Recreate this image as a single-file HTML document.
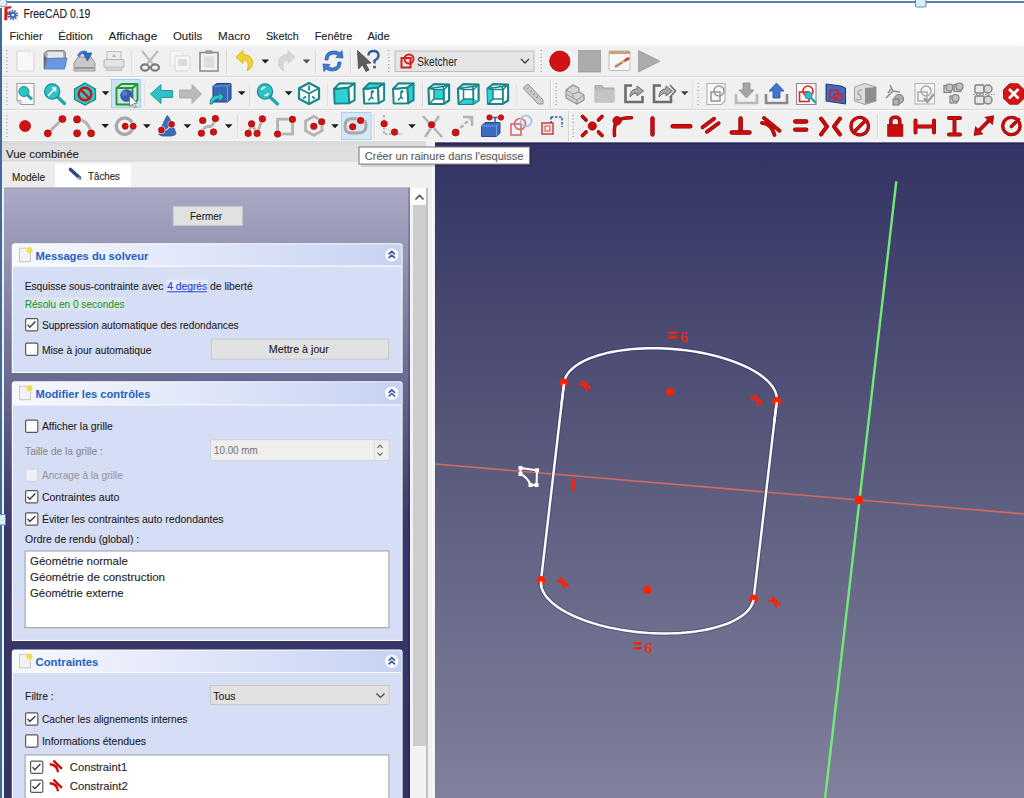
<!DOCTYPE html>
<html><head><meta charset="utf-8"><style>
html,body{margin:0;padding:0;background:#fff;overflow:hidden}
svg{display:block}
text{font-family:"Liberation Sans", sans-serif}
</style></head><body>
<svg width="1024" height="798" viewBox="0 0 1024 798">
<defs>
<linearGradient id="g3d" x1="0" y1="0" x2="0" y2="1">
 <stop offset="0" stop-color="#333365"/>
 <stop offset="0.4" stop-color="#535378"/>
 <stop offset="1" stop-color="#81819d"/>
</linearGradient>
<linearGradient id="gpanel" gradientUnits="userSpaceOnUse" x1="0" y1="188" x2="0" y2="798">
 <stop offset="0" stop-color="#aaaac5"/>
 <stop offset="0.56" stop-color="#37376a"/>
 <stop offset="1" stop-color="#333366"/>
</linearGradient>
<linearGradient id="ghdr" x1="0" y1="0" x2="1" y2="0">
 <stop offset="0" stop-color="#f8f9fe"/>
 <stop offset="1" stop-color="#c6d2f2"/>
</linearGradient>
<linearGradient id="gtop" x1="0" y1="0" x2="0" y2="1">
 <stop offset="0" stop-color="#ffffff"/>
 <stop offset="1" stop-color="#f0f0f0"/>
</linearGradient>
</defs><rect x="0" y="0" width="1024" height="798" fill="#ffffff" /><rect x="0" y="44" width="1024" height="4" fill="url(#gtop)" /><rect x="0" y="48" width="1024" height="94" fill="#f0f0f0" /><rect x="0" y="76" width="1024" height="1" fill="#d6d6d6" /><rect x="0" y="77" width="1024" height="1" fill="#fafafa" /><rect x="0" y="109" width="1024" height="1" fill="#d6d6d6" /><rect x="0" y="110" width="1024" height="1" fill="#fafafa" /><rect x="0" y="140" width="1024" height="1" fill="#f6f6f6" /><rect x="0" y="1" width="1024" height="2" fill="#5a7fab" /><rect x="0" y="8" width="2" height="790" fill="#3f6a9a" /><text x="23.4" y="18.2" font-size="12.5" fill="#1b1b2a" font-weight="normal" text-anchor="start" textLength="67.0" lengthAdjust="spacingAndGlyphs" stroke="#1b1b2a" stroke-width="0.12" >FreeCAD 0.19</text><path d="M4.5 7.5 Q6 6 11.5 6.2 L11 8.6 L7.6 8.8 L7.5 12.2 L10.5 12.2 L10.2 14.5 L7.5 14.5 L7.3 20.2 L4.2 20.2 Z" fill="#dc1c1c"/><circle cx="12.8" cy="15" r="4.2" fill="none" stroke="#3a68b0" stroke-width="2.2" stroke-dasharray="1.5 1.1"/><circle cx="12.8" cy="15" r="3.2" fill="#3a68b0"/><circle cx="12.8" cy="15" r="1.2" fill="#ffffff"/><circle cx="3" cy="3" r="4" fill="#e6eef8" stroke="#7a98bd" stroke-width="1"/><rect x="915.5" y="-1.5" width="10.5" height="8.5" rx="1.5" fill="#d4eefa" stroke="#6a8ab8" stroke-width="1.1"/><text x="9.4" y="39.5" font-size="11.7" fill="#1e1e1e" font-weight="normal" text-anchor="start" textLength="33.2" lengthAdjust="spacingAndGlyphs" stroke="#1e1e1e" stroke-width="0.12" >Fichier</text><text x="58.2" y="39.5" font-size="11.7" fill="#1e1e1e" font-weight="normal" text-anchor="start" textLength="34.6" lengthAdjust="spacingAndGlyphs" stroke="#1e1e1e" stroke-width="0.12" >Édition</text><text x="108.4" y="39.5" font-size="11.7" fill="#1e1e1e" font-weight="normal" text-anchor="start" textLength="48.8" lengthAdjust="spacingAndGlyphs" stroke="#1e1e1e" stroke-width="0.12" >Affichage</text><text x="172.9" y="39.5" font-size="11.7" fill="#1e1e1e" font-weight="normal" text-anchor="start" textLength="29.3" lengthAdjust="spacingAndGlyphs" stroke="#1e1e1e" stroke-width="0.12" >Outils</text><text x="218.1" y="39.5" font-size="11.7" fill="#1e1e1e" font-weight="normal" text-anchor="start" textLength="32.1" lengthAdjust="spacingAndGlyphs" stroke="#1e1e1e" stroke-width="0.12" >Macro</text><text x="265.9" y="39.5" font-size="11.7" fill="#1e1e1e" font-weight="normal" text-anchor="start" textLength="32.8" lengthAdjust="spacingAndGlyphs" stroke="#1e1e1e" stroke-width="0.12" >Sketch</text><text x="314.7" y="39.5" font-size="11.7" fill="#1e1e1e" font-weight="normal" text-anchor="start" textLength="37.5" lengthAdjust="spacingAndGlyphs" stroke="#1e1e1e" stroke-width="0.12" >Fenêtre</text><text x="367.4" y="39.5" font-size="11.7" fill="#1e1e1e" font-weight="normal" text-anchor="start" textLength="22.3" lengthAdjust="spacingAndGlyphs" stroke="#1e1e1e" stroke-width="0.12" >Aide</text><rect x="2" y="141" width="433" height="657" fill="#f0f0f0" /><rect x="2" y="141" width="433" height="4" fill="#dadada" /><rect x="2" y="145" width="433" height="16" fill="#dfdfdf" /><rect x="2" y="160.5" width="433" height="1" fill="#d2d2d2" /><text x="6.0" y="158.2" font-size="11.7" fill="#1e1e1e" font-weight="normal" text-anchor="start" textLength="73.0" lengthAdjust="spacingAndGlyphs" stroke="#1e1e1e" stroke-width="0.12" >Vue combinée</text><rect x="3" y="164" width="52" height="23" fill="#ececec" /><rect x="55" y="164" width="76" height="23" fill="#ffffff" /><text x="12.0" y="181.0" font-size="11.5" fill="#1e1e1e" font-weight="normal" text-anchor="start" textLength="33.0" lengthAdjust="spacingAndGlyphs" stroke="#1e1e1e" stroke-width="0.12" >Modèle</text><text x="88.0" y="179.5" font-size="11.5" fill="#1e1e1e" font-weight="normal" text-anchor="start" textLength="32.0" lengthAdjust="spacingAndGlyphs" stroke="#1e1e1e" stroke-width="0.12" >Tâches</text><g transform="translate(69,168)"><path d="M1.5 1.5 L10.5 9.8" stroke="#2a4a8a" stroke-width="3.6" stroke-linecap="round"/><path d="M9.5 8.2 L13.6 12.6 L8.3 11 Z" fill="#a8a8b0"/></g><rect x="4" y="188" width="406" height="610" fill="url(#gpanel)" /><rect x="4" y="187.5" width="406" height="1" fill="#9494ae" /><rect x="408.3" y="188" width="2" height="610" fill="#101040" opacity="0.25"/><rect x="410" y="188" width="16" height="610" fill="#f2f2f2" /><rect x="410" y="188" width="16" height="17" fill="#fbfbfb" /><rect x="413" y="205" width="13" height="541" fill="#cdcdcd" /><path d="M415.5 199.5 L419.5 195.5 L423.5 199.5" fill="none" stroke="#505050" stroke-width="1.6"/><rect x="426" y="141" width="9" height="657" fill="#f0f0f0" /><rect x="426" y="188" width="2" height="610" fill="#c2c2c2" /><rect x="432" y="141" width="1.5" height="657" fill="#fafafa" /><rect x="173.2" y="206.4" width="69.3" height="19.1" fill="#e1e1e1" stroke="#c8c8c8" stroke-width="0.8"/><text x="190.0" y="220.4" font-size="11.7" fill="#1e1e1e" font-weight="normal" text-anchor="start" textLength="32.2" lengthAdjust="spacingAndGlyphs" stroke="#1e1e1e" stroke-width="0.12" >Fermer</text><path d="M11.8 373 L11.8 246.2 Q11.8 243.2 14.8 243.2 L399.6 243.2 Q402.6 243.2 402.6 246.2 L402.6 373 Z" fill="#ffffff"/><path d="M12.8 265.6 L12.8 246.7 Q12.8 244.2 15.3 244.2 L399.1 244.2 Q401.6 244.2 401.6 246.7 L401.6 265.6 Z" fill="url(#ghdr)"/><rect x="12.8" y="266.6" width="388.8" height="105.39999999999998" fill="#d6def6" /><rect x="19.5" y="248.2" width="11" height="13.5" fill="#f2f2f2" stroke="#c9c9c9" stroke-width="1"/><circle cx="29.5" cy="250.2" r="3" fill="#f0e040"/><text x="35.5" y="259.6" font-size="11.7" fill="#2160c8" font-weight="bold" text-anchor="start" textLength="112.8" lengthAdjust="spacingAndGlyphs" >Messages du solveur</text><circle cx="391.8" cy="254.9" r="7" fill="#ffffff" stroke="#c8d0e8" stroke-width="0.8"/><path d="M388.6 254.4 L391.8 251.4 L395 254.4 M388.6 258.1 L391.8 255.1 L395 258.1" fill="none" stroke="#2a56a8" stroke-width="1.6"/><text x="24.7" y="290.3" font-size="11.7" fill="#1e1e1e" font-weight="normal" text-anchor="start" textLength="138.6" lengthAdjust="spacingAndGlyphs" stroke="#1e1e1e" stroke-width="0.12" >Esquisse sous-contrainte avec</text><rect x="166.5" y="279.5" width="41.5" height="14" fill="#e4eaf8" /><text x="167.2" y="290.3" font-size="11.7" fill="#1a3ee0" font-weight="normal" text-anchor="start" textLength="40.0" lengthAdjust="spacingAndGlyphs" stroke="#1a3ee0" stroke-width="0.12" >4 degrés</text><rect x="167" y="291.3" width="40" height="1" fill="#1a3ee0"/><text x="210.0" y="290.3" font-size="11.7" fill="#1e1e1e" font-weight="normal" text-anchor="start" textLength="42.7" lengthAdjust="spacingAndGlyphs" stroke="#1e1e1e" stroke-width="0.12" >de liberté</text><rect x="24" y="297.5" width="101.5" height="13" fill="#dfe5ef" /><text x="24.7" y="308.3" font-size="11.7" fill="#1e9a30" font-weight="normal" text-anchor="start" textLength="99.9" lengthAdjust="spacingAndGlyphs" stroke="#1e9a30" stroke-width="0.12" >Résolu en 0 secondes</text><rect x="25.6" y="318.6" width="12.2" height="12.2" rx="1.2" fill="#ffffff" stroke="#5a5a5a" stroke-width="1.2"/><path d="M27.6 324.6 L29.8 327.2 L35.4 321.6" fill="none" stroke="#3a3a3a" stroke-width="1.4"/><text x="41.9" y="329.1" font-size="11.7" fill="#1e1e1e" font-weight="normal" text-anchor="start" textLength="196.8" lengthAdjust="spacingAndGlyphs" stroke="#1e1e1e" stroke-width="0.12" >Suppression automatique des redondances</text><rect x="25.6" y="343.1" width="12.2" height="12.2" rx="1.2" fill="#ffffff" stroke="#5a5a5a" stroke-width="1.2"/><text x="41.9" y="354.0" font-size="11.7" fill="#1e1e1e" font-weight="normal" text-anchor="start" textLength="109.6" lengthAdjust="spacingAndGlyphs" stroke="#1e1e1e" stroke-width="0.12" >Mise à jour automatique</text><rect x="211.2" y="339.1" width="177.5" height="20" fill="#e1e1e1" stroke="#c4c4c4" stroke-width="0.8"/><text x="268.8" y="353.3" font-size="11.7" fill="#1e1e1e" font-weight="normal" text-anchor="start" textLength="60.1" lengthAdjust="spacingAndGlyphs" stroke="#1e1e1e" stroke-width="0.12" >Mettre à jour</text><path d="M11.8 640.9 L11.8 384.2 Q11.8 381.2 14.8 381.2 L399.6 381.2 Q402.6 381.2 402.6 384.2 L402.6 640.9 Z" fill="#ffffff"/><path d="M12.8 404.4 L12.8 384.7 Q12.8 382.2 15.3 382.2 L399.1 382.2 Q401.6 382.2 401.6 384.7 L401.6 404.4 Z" fill="url(#ghdr)"/><rect x="12.8" y="405.4" width="388.8" height="234.5" fill="#d6def6" /><rect x="19.5" y="386.2" width="11" height="13.5" fill="#f2f2f2" stroke="#c9c9c9" stroke-width="1"/><circle cx="29.5" cy="388.2" r="3" fill="#f0e040"/><text x="35.5" y="398.4" font-size="11.7" fill="#2160c8" font-weight="bold" text-anchor="start" textLength="114.9" lengthAdjust="spacingAndGlyphs" >Modifier les contrôles</text><circle cx="391.8" cy="393.29999999999995" r="7" fill="#ffffff" stroke="#c8d0e8" stroke-width="0.8"/><path d="M388.6 392.79999999999995 L391.8 389.79999999999995 L395 392.79999999999995 M388.6 396.49999999999994 L391.8 393.49999999999994 L395 396.49999999999994" fill="none" stroke="#2a56a8" stroke-width="1.6"/><rect x="25.6" y="420.1" width="12.2" height="12.2" rx="1.2" fill="#ffffff" stroke="#5a5a5a" stroke-width="1.2"/><text x="41.9" y="430.1" font-size="11.7" fill="#1e1e1e" font-weight="normal" text-anchor="start" textLength="70.9" lengthAdjust="spacingAndGlyphs" stroke="#1e1e1e" stroke-width="0.12" >Afficher la grille</text><text x="25.1" y="454.8" font-size="11.7" fill="#8a8a8a" font-weight="normal" text-anchor="start" textLength="77.6" lengthAdjust="spacingAndGlyphs" stroke="#8a8a8a" stroke-width="0.12" >Taille de la grille :</text><rect x="210.7" y="439.8" width="178.4" height="20.6" fill="#efefef" stroke="#d0d0d0" stroke-width="0.8"/><text x="214.0" y="454.4" font-size="11.7" fill="#7a7a7a" font-weight="normal" text-anchor="start" textLength="43.6" lengthAdjust="spacingAndGlyphs" stroke="#7a7a7a" stroke-width="0.12" >10.00 mm</text><path d="M377.5 448 L380 445 L382.5 448 M377.5 452.5 L380 455.5 L382.5 452.5" fill="none" stroke="#555" stroke-width="1.1"/><rect x="374" y="440.5" width="0.8" height="19" fill="#d8d8d8" /><rect x="25.6" y="469.1" width="12.2" height="12.2" rx="1.2" fill="#eef0f8" stroke="#d4d4dc" stroke-width="1.2"/><text x="41.9" y="479.0" font-size="11.7" fill="#9a9a9a" font-weight="normal" text-anchor="start" textLength="81.0" lengthAdjust="spacingAndGlyphs" stroke="#9a9a9a" stroke-width="0.12" >Ancrage à la grille</text><rect x="25.6" y="490.6" width="12.2" height="12.2" rx="1.2" fill="#ffffff" stroke="#5a5a5a" stroke-width="1.2"/><path d="M27.6 496.6 L29.8 499.2 L35.4 493.6" fill="none" stroke="#3a3a3a" stroke-width="1.4"/><text x="41.9" y="500.6" font-size="11.7" fill="#1e1e1e" font-weight="normal" text-anchor="start" textLength="77.4" lengthAdjust="spacingAndGlyphs" stroke="#1e1e1e" stroke-width="0.12" >Contraintes auto</text><rect x="25.6" y="512.9" width="12.2" height="12.2" rx="1.2" fill="#ffffff" stroke="#5a5a5a" stroke-width="1.2"/><path d="M27.6 518.9 L29.8 521.5 L35.4 515.9" fill="none" stroke="#3a3a3a" stroke-width="1.4"/><text x="41.9" y="523.2" font-size="11.7" fill="#1e1e1e" font-weight="normal" text-anchor="start" textLength="181.7" lengthAdjust="spacingAndGlyphs" stroke="#1e1e1e" stroke-width="0.12" >Éviter les contraintes auto redondantes</text><text x="25.1" y="542.5" font-size="11.7" fill="#1e1e1e" font-weight="normal" text-anchor="start" textLength="114.1" lengthAdjust="spacingAndGlyphs" stroke="#1e1e1e" stroke-width="0.12" >Ordre de rendu (global) :</text><rect x="25.1" y="551" width="363.8" height="76.7" fill="#ffffff" stroke="#9a9aa6" stroke-width="1"/><text x="30.1" y="564.9" font-size="11.7" fill="#1e1e1e" font-weight="normal" text-anchor="start" textLength="97.7" lengthAdjust="spacingAndGlyphs" stroke="#1e1e1e" stroke-width="0.12" >Géométrie normale</text><text x="30.1" y="581.2" font-size="11.7" fill="#1e1e1e" font-weight="normal" text-anchor="start" textLength="134.9" lengthAdjust="spacingAndGlyphs" stroke="#1e1e1e" stroke-width="0.12" >Géométrie de construction</text><text x="30.1" y="597.1" font-size="11.7" fill="#1e1e1e" font-weight="normal" text-anchor="start" textLength="93.4" lengthAdjust="spacingAndGlyphs" stroke="#1e1e1e" stroke-width="0.12" >Géométrie externe</text><path d="M11.8 810 L11.8 652.4 Q11.8 649.4 14.8 649.4 L399.6 649.4 Q402.6 649.4 402.6 652.4 L402.6 810 Z" fill="#ffffff"/><path d="M12.8 671.9 L12.8 652.9 Q12.8 650.4 15.3 650.4 L399.1 650.4 Q401.6 650.4 401.6 652.9 L401.6 671.9 Z" fill="url(#ghdr)"/><rect x="12.8" y="672.9" width="388.8" height="136.10000000000002" fill="#d6def6" /><rect x="19.5" y="654.4" width="11" height="13.5" fill="#f2f2f2" stroke="#c9c9c9" stroke-width="1"/><circle cx="29.5" cy="656.4" r="3" fill="#f0e040"/><text x="35.5" y="665.9" font-size="11.7" fill="#2160c8" font-weight="bold" text-anchor="start" textLength="62.9" lengthAdjust="spacingAndGlyphs" >Contraintes</text><circle cx="391.8" cy="661.15" r="7" fill="#ffffff" stroke="#c8d0e8" stroke-width="0.8"/><path d="M388.6 660.65 L391.8 657.65 L395 660.65 M388.6 664.35 L391.8 661.35 L395 664.35" fill="none" stroke="#2a56a8" stroke-width="1.6"/><text x="25.1" y="700.2" font-size="11.7" fill="#1e1e1e" font-weight="normal" text-anchor="start" textLength="28.6" lengthAdjust="spacingAndGlyphs" stroke="#1e1e1e" stroke-width="0.12" >Filtre :</text><rect x="210.3" y="685.5" width="178.8" height="18.9" fill="#e1e1e1" stroke="#c4c4c4" stroke-width="0.8"/><text x="213.3" y="700.1" font-size="11.7" fill="#1e1e1e" font-weight="normal" text-anchor="start" textLength="22.2" lengthAdjust="spacingAndGlyphs" stroke="#1e1e1e" stroke-width="0.12" >Tous</text><path d="M376.5 693.5 L380.5 697.5 L384.5 693.5" fill="none" stroke="#444" stroke-width="1.2"/><rect x="25.6" y="712.9" width="12.2" height="12.2" rx="1.2" fill="#ffffff" stroke="#5a5a5a" stroke-width="1.2"/><path d="M27.6 718.9 L29.8 721.5 L35.4 715.9" fill="none" stroke="#3a3a3a" stroke-width="1.4"/><text x="41.9" y="722.7" font-size="11.7" fill="#1e1e1e" font-weight="normal" text-anchor="start" textLength="145.5" lengthAdjust="spacingAndGlyphs" stroke="#1e1e1e" stroke-width="0.12" >Cacher les alignements internes</text><rect x="25.6" y="734.9" width="12.2" height="12.2" rx="1.2" fill="#ffffff" stroke="#5a5a5a" stroke-width="1.2"/><text x="41.9" y="744.9" font-size="11.7" fill="#1e1e1e" font-weight="normal" text-anchor="start" textLength="104.2" lengthAdjust="spacingAndGlyphs" stroke="#1e1e1e" stroke-width="0.12" >Informations étendues</text><rect x="25.1" y="755" width="363.8" height="60" fill="#ffffff" stroke="#9a9aa6" stroke-width="1"/><rect x="30.6" y="761.1" width="12.2" height="12.2" rx="1.2" fill="#ffffff" stroke="#5a5a5a" stroke-width="1.2"/><path d="M32.6 767.1 L34.8 769.7 L40.4 764.1" fill="none" stroke="#3a3a3a" stroke-width="1.4"/><g transform="translate(49,760.0)"><path d="M4.4 0.6 L12.9 8.9 M0.7 4.2 Q8.5 4.6 8.9 12.3" stroke="#cc0a0a" stroke-width="2.4" fill="none"/></g><text x="69.8" y="771.1" font-size="11.7" fill="#1e1e1e" font-weight="normal" text-anchor="start" textLength="57.4" lengthAdjust="spacingAndGlyphs" stroke="#1e1e1e" stroke-width="0.12" >Constraint1</text><rect x="30.6" y="780.1" width="12.2" height="12.2" rx="1.2" fill="#ffffff" stroke="#5a5a5a" stroke-width="1.2"/><path d="M32.6 786.1 L34.8 788.7 L40.4 783.1" fill="none" stroke="#3a3a3a" stroke-width="1.4"/><g transform="translate(49,779.0)"><path d="M4.4 0.6 L12.9 8.9 M0.7 4.2 Q8.5 4.6 8.9 12.3" stroke="#cc0a0a" stroke-width="2.4" fill="none"/></g><text x="69.8" y="790.0" font-size="11.7" fill="#1e1e1e" font-weight="normal" text-anchor="start" textLength="58.0" lengthAdjust="spacingAndGlyphs" stroke="#1e1e1e" stroke-width="0.12" >Constraint2</text><rect x="435" y="142.5" width="589" height="656" fill="url(#g3d)" /><rect x="435" y="142.5" width="589" height="2" fill="#20205a" opacity="0.7"/><line x1="435.0" y1="464.0" x2="1024.0" y2="513.9" stroke="#d46a5e" stroke-width="1.6"/><line x1="896.3" y1="181.3" x2="825.1" y2="798.0" stroke="#70ec74" stroke-width="2.4"/><path d="M564.05 382.80 L564.46 380.57 L565.16 378.38 L566.14 376.22 L567.41 374.10 L568.97 372.04 L570.80 370.02 L572.91 368.07 L575.28 366.19 L577.91 364.37 L580.80 362.63 L583.93 360.97 L587.30 359.40 L590.90 357.92 L594.71 356.52 L598.73 355.23 L602.95 354.04 L607.36 352.95 L611.93 351.97 L616.67 351.09 L621.56 350.33 L626.57 349.69 L631.71 349.16 L636.96 348.75 L642.29 348.45 L647.70 348.28 L653.18 348.22 L658.70 348.29 L664.26 348.47 L669.83 348.78 L675.40 349.20 L680.96 349.74 L686.49 350.40 L691.98 351.17 L697.40 352.05 L702.76 353.04 L708.02 354.14 L713.18 355.34 L718.22 356.64 L723.14 358.04 L727.91 359.53 L732.52 361.12 L736.96 362.78 L741.21 364.53 L745.28 366.35 L749.14 368.24 L752.78 370.20 L756.20 372.21 L759.38 374.29 L762.32 376.41 L765.00 378.57 L767.43 380.77 L769.59 383.00 L771.48 385.25 L773.09 387.52 L774.42 389.81 L775.47 392.10 L776.22 394.39 L776.69 396.68 L776.87 398.95 L776.75 401.20 L753.65 598.89 L753.25 601.12 L752.55 603.32 L751.56 605.48 L750.29 607.59 L748.74 609.66 L746.90 611.67 L744.80 613.62 L742.43 615.51 L739.79 617.32 L736.91 619.06 L733.77 620.72 L730.41 622.29 L726.81 623.78 L722.99 625.17 L718.97 626.46 L714.75 627.66 L710.35 628.74 L705.77 629.73 L701.03 630.60 L696.15 631.36 L691.13 632.00 L685.99 632.53 L680.75 632.95 L675.41 633.24 L670.00 633.42 L664.53 633.47 L659.00 633.41 L653.45 633.22 L647.88 632.92 L642.30 632.49 L636.75 631.95 L631.22 631.30 L625.73 630.53 L620.30 629.65 L614.95 628.65 L609.69 627.56 L604.52 626.35 L599.48 625.05 L594.57 623.65 L589.80 622.16 L585.19 620.58 L580.75 618.91 L576.49 617.17 L572.43 615.34 L568.57 613.45 L564.93 611.50 L561.51 609.48 L558.33 607.41 L555.39 605.29 L552.70 603.13 L550.28 600.93 L548.12 598.70 L546.23 596.44 L544.62 594.17 L543.28 591.88 L542.24 589.59 L541.48 587.30 L541.01 585.02 L540.84 582.75 L540.95 580.49 Z" fill="none" stroke="#1c1c50" stroke-width="4.4" stroke-linejoin="round" opacity="0.3"/><path d="M564.05 382.80 L564.46 380.57 L565.16 378.38 L566.14 376.22 L567.41 374.10 L568.97 372.04 L570.80 370.02 L572.91 368.07 L575.28 366.19 L577.91 364.37 L580.80 362.63 L583.93 360.97 L587.30 359.40 L590.90 357.92 L594.71 356.52 L598.73 355.23 L602.95 354.04 L607.36 352.95 L611.93 351.97 L616.67 351.09 L621.56 350.33 L626.57 349.69 L631.71 349.16 L636.96 348.75 L642.29 348.45 L647.70 348.28 L653.18 348.22 L658.70 348.29 L664.26 348.47 L669.83 348.78 L675.40 349.20 L680.96 349.74 L686.49 350.40 L691.98 351.17 L697.40 352.05 L702.76 353.04 L708.02 354.14 L713.18 355.34 L718.22 356.64 L723.14 358.04 L727.91 359.53 L732.52 361.12 L736.96 362.78 L741.21 364.53 L745.28 366.35 L749.14 368.24 L752.78 370.20 L756.20 372.21 L759.38 374.29 L762.32 376.41 L765.00 378.57 L767.43 380.77 L769.59 383.00 L771.48 385.25 L773.09 387.52 L774.42 389.81 L775.47 392.10 L776.22 394.39 L776.69 396.68 L776.87 398.95 L776.75 401.20 L753.65 598.89 L753.25 601.12 L752.55 603.32 L751.56 605.48 L750.29 607.59 L748.74 609.66 L746.90 611.67 L744.80 613.62 L742.43 615.51 L739.79 617.32 L736.91 619.06 L733.77 620.72 L730.41 622.29 L726.81 623.78 L722.99 625.17 L718.97 626.46 L714.75 627.66 L710.35 628.74 L705.77 629.73 L701.03 630.60 L696.15 631.36 L691.13 632.00 L685.99 632.53 L680.75 632.95 L675.41 633.24 L670.00 633.42 L664.53 633.47 L659.00 633.41 L653.45 633.22 L647.88 632.92 L642.30 632.49 L636.75 631.95 L631.22 631.30 L625.73 630.53 L620.30 629.65 L614.95 628.65 L609.69 627.56 L604.52 626.35 L599.48 625.05 L594.57 623.65 L589.80 622.16 L585.19 620.58 L580.75 618.91 L576.49 617.17 L572.43 615.34 L568.57 613.45 L564.93 611.50 L561.51 609.48 L558.33 607.41 L555.39 605.29 L552.70 603.13 L550.28 600.93 L548.12 598.70 L546.23 596.44 L544.62 594.17 L543.28 591.88 L542.24 589.59 L541.48 587.30 L541.01 585.02 L540.84 582.75 L540.95 580.49 Z" fill="none" stroke="#ffffff" stroke-width="2.4" stroke-linejoin="round"/><circle cx="564.0" cy="382.8" r="4.4" fill="#ff2000"/><circle cx="776.8" cy="401.2" r="4.4" fill="#ff2000"/><circle cx="753.7" cy="598.9" r="4.4" fill="#ff2000"/><circle cx="541.0" cy="580.5" r="4.4" fill="#ff2000"/><line x1="564.0" y1="383.8" x2="561.5" y2="404.2" stroke="#ffffff" stroke-width="2.4"/><line x1="776.8" y1="402.2" x2="774.2" y2="422.6" stroke="#ffffff" stroke-width="2.4"/><line x1="753.7" y1="599.9" x2="751.8" y2="605.2" stroke="#ffffff" stroke-width="2.4"/><line x1="541.0" y1="581.5" x2="541.3" y2="587.0" stroke="#ffffff" stroke-width="2.4"/><circle cx="670.4" cy="392.0" r="4" fill="#ff2000"/><circle cx="647.3" cy="589.7" r="4" fill="#ff2000"/><circle cx="858.8" cy="499.9" r="4.3" fill="#ff2000"/><rect x="668.4" y="331.5" width="8.3" height="2.3" fill="#ff2000"/><rect x="668.4" y="336.3" width="8.3" height="2.3" fill="#ff2000"/><text x="679.9" y="341.90000000000003" font-size="14.5" fill="#ff2000" stroke="#ff2000" stroke-width="0.3" style="font-family:Liberation Serif">6</text><rect x="633.5" y="642.2" width="8.3" height="2.3" fill="#ff2000"/><rect x="633.5" y="647" width="8.3" height="2.3" fill="#ff2000"/><text x="645.0" y="652.6" font-size="14.5" fill="#ff2000" stroke="#ff2000" stroke-width="0.3" style="font-family:Liberation Serif">6</text><g transform="translate(579,380.5)"><path d="M3.6 0.4 L11 7.6 M0.3 3.6 Q7 3.2 7.6 10.2" stroke="#ff2000" stroke-width="2.1" fill="none" stroke-linecap="round"/></g><g transform="translate(750.8,394.9)"><path d="M3.6 0.4 L11 7.6 M0.3 3.6 Q7 3.2 7.6 10.2" stroke="#ff2000" stroke-width="2.1" fill="none" stroke-linecap="round"/></g><g transform="translate(556.9,577.8)"><path d="M3.6 0.4 L11 7.6 M0.3 3.6 Q7 3.2 7.6 10.2" stroke="#ff2000" stroke-width="2.1" fill="none" stroke-linecap="round"/></g><g transform="translate(768.8,596.9)"><path d="M3.6 0.4 L11 7.6 M0.3 3.6 Q7 3.2 7.6 10.2" stroke="#ff2000" stroke-width="2.1" fill="none" stroke-linecap="round"/></g><rect x="572" y="478.5" width="2.6" height="12" fill="#ff2000" /><path d="M520.5 474 L520.5 468 L537 470.3 L536.5 485 L530.5 485 Q527.5 477 520.5 474 Z" fill="none" stroke="#ffffff" stroke-width="2"/><rect x="518.5" y="466" width="4" height="4" fill="#ffffff"/><rect x="535" y="468.3" width="4" height="4" fill="#ffffff"/><rect x="534.5" y="483" width="4" height="4" fill="#ffffff"/><rect x="528.5" y="483" width="4" height="4" fill="#ffffff"/><rect x="518.5" y="472" width="4" height="4" fill="#ffffff"/><rect x="-1" y="514.5" width="6.5" height="10.5" fill="#d8eefa" stroke="#5a88b8" stroke-width="1"/><rect x="361" y="150" width="171" height="17" fill="#000000" opacity="0.12"/><rect x="359" y="147" width="170.6" height="17.1" fill="#ffffff" stroke="#767676" stroke-width="1"/><text x="364.8" y="160.0" font-size="11.7" fill="#5a5a5a" font-weight="normal" text-anchor="start" textLength="158.7" lengthAdjust="spacingAndGlyphs" stroke="#5a5a5a" stroke-width="0.12" >Créer un rainure dans l'esquisse</text>
<rect x="6" y="50" width="1.5" height="1" fill="#a8a8a8"/>
<rect x="6" y="53.5" width="1.5" height="1" fill="#a8a8a8"/>
<rect x="6" y="57.0" width="1.5" height="1" fill="#a8a8a8"/>
<rect x="6" y="60.5" width="1.5" height="1" fill="#a8a8a8"/>
<rect x="6" y="64.0" width="1.5" height="1" fill="#a8a8a8"/>
<rect x="6" y="67.5" width="1.5" height="1" fill="#a8a8a8"/>
<rect x="6" y="71.0" width="1.5" height="1" fill="#a8a8a8"/>
<path d="M17 51 L31 51 L34 54 L34 71 L17 71 Z" fill="#f8f8f8" stroke="#d9d9d9" stroke-width="1.2"/>
<circle cx="31.5" cy="53.5" r="2.5" fill="#fff" stroke="#dedede" stroke-width="0.8"/>
<path d="M44 53.5 L47 50.5 L64 50.5 L65.5 53 L65.5 66 L44 68 Z" fill="#a9a9a9" stroke="#7a7a7a" stroke-width="0.8"/>
<path d="M47.5 52 L63 52 L63.5 58 L47.5 58 Z" fill="#e6e6e6"/>
<path d="M47 58.5 L67 58 L64.5 69 L44 69 Z" fill="#6a98de" stroke="#4a74b8" stroke-width="0.8"/>
<path d="M44 55 L47 58.5 L44 69 Z" fill="#6a6a6a"/>
<path d="M74 63 L78 57 L91 57 L95 63 L95 71 L74 71 Z" fill="#c9c9c9" stroke="#8e8e8e" stroke-width="0.9"/>
<rect x="75" y="67" width="19" height="2" fill="#9a9a9a"/>
<path d="M77 56 Q80 49 87 51 L87 54 Q81 53 80 57 Z" fill="#3f7fd0"/>
<path d="M83 53 L92 53 L87.5 61 Z" fill="#2f6cc0" stroke="#1f4f98" stroke-width="0.6"/>
<rect x="107" y="51.5" width="14" height="8" fill="#ececec" stroke="#bdbdbd" stroke-width="1"/>
<path d="M112 57 L114 54 L116 57 Z" fill="#b0b0b0"/>
<rect x="104" y="59.5" width="20" height="8" rx="1.5" fill="#e4e4e4" stroke="#b5b5b5" stroke-width="1.1"/>
<rect x="106" y="67" width="16" height="3.5" fill="#d2d2d2" stroke="#b8b8b8" stroke-width="0.8"/>
<rect x="131.5" y="50" width="1" height="23" fill="#d2d2d2"/><rect x="132.5" y="50" width="1" height="23" fill="#fafafa"/>
<path d="M142 51 L153 64 M158 51 L147 64" stroke="#bcbcbc" stroke-width="2.2" fill="none"/>
<ellipse cx="145" cy="67.5" rx="4" ry="3.2" fill="none" stroke="#7a7a7a" stroke-width="2.2"/>
<ellipse cx="155" cy="67.5" rx="4" ry="3.2" fill="none" stroke="#7a7a7a" stroke-width="2.2"/>
<rect x="170" y="51" width="13" height="15" fill="#f4f4f4" stroke="#e0e0e0" stroke-width="1"/>
<path d="M175 56 L190 56 L190 68 L187 71 L175 71 Z" fill="#f6f6f6" stroke="#d8d8d8" stroke-width="1"/>
<rect x="178" y="59" width="9" height="7" fill="#dcdcdc"/>
<rect x="200" y="52.5" width="18" height="18.5" fill="#f2f2f2" stroke="#8c8c8c" stroke-width="1.6"/>
<rect x="205.5" y="50.3" width="7" height="3.5" fill="#9a9a9a"/>
<rect x="203.5" y="56.5" width="11" height="11" fill="#dddddd"/>
<rect x="226" y="50" width="1" height="23" fill="#d2d2d2"/><rect x="227" y="50" width="1" height="23" fill="#fafafa"/>
<path d="M236 57 L243 50.5 L243 54.5 Q253 55 252.5 63.5 Q252 69 247 70.5 Q249 66 248 63 Q247 59.5 243 60 L243 63.5 Z" fill="#f2d22c" stroke="#d8ac10" stroke-width="0.8"/>
<path d="M261.5 59.5 L269.1 59.5 L265.3 63.5 Z" fill="#1a1a1a"/>
<path d="M295 57 L288 50.5 L288 54.5 Q278 55 278.5 63.5 Q279 69 284 70.5 Q282 66 283 63 Q284 59.5 288 60 L288 63.5 Z" fill="#d6d6d6" stroke="#cacaca" stroke-width="0.8"/>
<path d="M302.7 59.5 L310.3 59.5 L306.5 63.5 Z" fill="#505050"/>
<rect x="315" y="50" width="1" height="23" fill="#d2d2d2"/><rect x="316" y="50" width="1" height="23" fill="#fafafa"/>
<path d="M325 60 Q325 51 334 51 Q338 51 340 53 L342 50.5 L343 58 L336 57.5 L338 55.5 Q333 52.5 329 56 Q328 58 328 60 Z" fill="#3d7ad0" stroke="#24549c" stroke-width="0.7"/>
<path d="M341 62 Q341 71 332 71 Q328 71 326 69 L324 71.5 L323 64 L330 64.5 L328 66.5 Q333 69.5 337 66 Q338 64 338 62 Z" fill="#3d7ad0" stroke="#24549c" stroke-width="0.7"/>
<rect x="350" y="50" width="1" height="23" fill="#d2d2d2"/><rect x="351" y="50" width="1" height="23" fill="#fafafa"/>
<path d="M357.5 50.5 L371 63 L365.5 63.5 L369 70 L366 71.5 L362.5 65 L358.5 69 Z" fill="#5e5e5e" stroke="#3a3a3a" stroke-width="0.7"/>
<path d="M368.5 55.5 Q368.5 51 373.5 51 Q378.5 51 378.5 55.5 Q378.5 58.5 374.5 60.5 L374.5 63.5" fill="none" stroke="#2d5f9f" stroke-width="2.4"/>
<rect x="373.2" y="65.8" width="2.6" height="2.6" fill="#2d5f9f"/>
<rect x="388" y="50" width="1.5" height="1" fill="#a8a8a8"/>
<rect x="388" y="53.5" width="1.5" height="1" fill="#a8a8a8"/>
<rect x="388" y="57.0" width="1.5" height="1" fill="#a8a8a8"/>
<rect x="388" y="60.5" width="1.5" height="1" fill="#a8a8a8"/>
<rect x="388" y="64.0" width="1.5" height="1" fill="#a8a8a8"/>
<rect x="388" y="67.5" width="1.5" height="1" fill="#a8a8a8"/>
<rect x="388" y="71.0" width="1.5" height="1" fill="#a8a8a8"/>
<rect x="395" y="51" width="139" height="20.5" fill="#e5e5e5" stroke="#bcbcbc" stroke-width="1"/>
<rect x="401.5" y="58" width="9" height="9.5" fill="none" stroke="#d42020" stroke-width="2"/>
<circle cx="409" cy="59" r="4.5" fill="none" stroke="#d42020" stroke-width="2"/>
<text x="417.3" y="65.9" font-size="12" fill="#1e1e2a" textLength="39.8" lengthAdjust="spacingAndGlyphs">Sketcher</text>
<path d="M521 59 L525 63 L529 59" fill="none" stroke="#404040" stroke-width="1.3"/>
<rect x="540.5" y="50" width="1.5" height="1" fill="#a8a8a8"/>
<rect x="540.5" y="53.5" width="1.5" height="1" fill="#a8a8a8"/>
<rect x="540.5" y="57.0" width="1.5" height="1" fill="#a8a8a8"/>
<rect x="540.5" y="60.5" width="1.5" height="1" fill="#a8a8a8"/>
<rect x="540.5" y="64.0" width="1.5" height="1" fill="#a8a8a8"/>
<rect x="540.5" y="67.5" width="1.5" height="1" fill="#a8a8a8"/>
<rect x="540.5" y="71.0" width="1.5" height="1" fill="#a8a8a8"/>
<circle cx="559.8" cy="61.2" r="11" fill="#ffffff" opacity="0.8"/>
<circle cx="559.8" cy="61.2" r="10.2" fill="#d01212" stroke="#a00808" stroke-width="0.8"/>
<rect x="578.5" y="50.5" width="22" height="21.5" fill="#ababab" stroke="#9a9a9a" stroke-width="0.8"/>
<rect x="609" y="51" width="21" height="19.5" rx="1.5" fill="#f6f6f6" stroke="#bdbdbd" stroke-width="1"/>
<rect x="609" y="51" width="21" height="3" fill="#c8a07a"/>
<path d="M615 67 L629 58" stroke="#b88070" stroke-width="2.6"/>
<path d="M625 60.5 L629 58" stroke="#e03030" stroke-width="2.6"/>
<circle cx="623" cy="62" r="1" fill="#f0e020"/>
<path d="M638.5 50.5 L660 61.2 L638.5 72 Z" fill="#ababab" stroke="#9c9c9c" stroke-width="0.8"/>
<rect x="6" y="83" width="1.5" height="1" fill="#a8a8a8"/>
<rect x="6" y="86.5" width="1.5" height="1" fill="#a8a8a8"/>
<rect x="6" y="90.0" width="1.5" height="1" fill="#a8a8a8"/>
<rect x="6" y="93.5" width="1.5" height="1" fill="#a8a8a8"/>
<rect x="6" y="97.0" width="1.5" height="1" fill="#a8a8a8"/>
<rect x="6" y="100.5" width="1.5" height="1" fill="#a8a8a8"/>
<rect x="6" y="104.0" width="1.5" height="1" fill="#a8a8a8"/>
<path d="M17 83.5 L34 83.5 L34 104.5 L21 104.5 L17 100.5 Z" fill="#fafafa" stroke="#9c9c9c" stroke-width="1.1"/>
<path d="M17 100.5 L21 100.5 L21 104.5" fill="#e0e0e0" stroke="#9c9c9c" stroke-width="0.8"/>
<line x1="26.5" y1="94" x2="32" y2="99.5" stroke="#1aa7ae" stroke-width="3"/>
<circle cx="23.9" cy="91.5" r="5" fill="#2cc3c8" stroke="#168a90" stroke-width="1"/>
<line x1="57" y1="96.5" x2="64.5" y2="103.5" stroke="#1aa7ae" stroke-width="3.2" stroke-linecap="round"/>
<circle cx="52.2" cy="91.5" r="7.6" fill="#2cc3c8" stroke="#168a90" stroke-width="1.2"/>
<path d="M48 96 L55 88.5 M52 88 L55.5 88 L55.5 91.5" stroke="#ffffff" stroke-width="1.6" fill="none"/>
<path d="M85 83 L95.5 89 L95.5 99.5 L85 105 L74.5 99.5 L74.5 89 Z" fill="#2dc6c8" stroke="#1b7f84" stroke-width="1.2"/>
<circle cx="85" cy="94" r="6.3" fill="none" stroke="#c41616" stroke-width="2.4"/>
<line x1="80.5" y1="89.5" x2="89.5" y2="98.5" stroke="#c41616" stroke-width="2.4"/>
<path d="M101.8 91.2 L109.39999999999999 91.2 L105.6 95.2 Z" fill="#1a1a1a"/>
<rect x="111.5" y="79.5" width="29" height="28" fill="#cce4f7" stroke="#a5cdef" stroke-width="1"/>
<path d="M116.5 88 L121.5 84 L137.5 84 L137.5 100 L132.5 104.5 L116.5 104.5 Z M116.5 88 L132.5 88 L137.5 84 M132.5 88 L132.5 104.5" fill="none" stroke="#239a23" stroke-width="1.9" stroke-linejoin="round"/>
<circle cx="126.5" cy="95.5" r="6.3" fill="#3a5dab"/>
<circle cx="124.5" cy="93.5" r="2.5" fill="#6e8fd0" opacity="0.6"/>
<path d="M129.5 96 L137.5 103 L134 103.3 L136.3 107 L134.6 107.8 L132.4 104.2 L129.8 106.6 Z" fill="#ffffff" stroke="#606060" stroke-width="0.7"/>
<rect x="144.5" y="83" width="1" height="23" fill="#d2d2d2"/><rect x="145.5" y="83" width="1" height="23" fill="#fafafa"/>
<path d="M150.5 94 L161 84.5 L161 90.5 L172.5 90.5 L172.5 97.5 L161 97.5 L161 103.5 Z" fill="#2cc3c8" stroke="#1b8f94" stroke-width="0.9"/>
<path d="M201.5 94 L192 84.5 L192 90 L179.5 90 L179.5 98 L192 98 L192 103.5 Z" fill="#bababa" stroke="#a8a8a8" stroke-width="0.9"/>
<path d="M213 86 L217 83.5 L231 83.5 L231 99 L227.5 102 L213 102 Z" fill="#3a66b6" stroke="#1e3f80" stroke-width="1"/>
<path d="M213 86 L227.5 86 L231 83.5 M227.5 86 L227.5 102" stroke="#7a9ee0" stroke-width="0.9" fill="none"/>
<path d="M210 104 Q210 95 219 95 L219 92 L224 97 L219 102 L219 99 Q214 99 212.5 104 Z" fill="#2cc3c8" stroke="#127a80" stroke-width="0.8"/>
<path d="M237.89999999999998 91.2 L245.5 91.2 L241.7 95.2 Z" fill="#1a1a1a"/>
<rect x="249.5" y="83" width="1" height="23" fill="#d2d2d2"/><rect x="250.5" y="83" width="1" height="23" fill="#fafafa"/>
<line x1="270" y1="97" x2="277.5" y2="104" stroke="#1aa7ae" stroke-width="3.2" stroke-linecap="round"/>
<circle cx="265" cy="91.5" r="7.6" fill="#2cc3c8" stroke="#168a90" stroke-width="1.2"/>
<path d="M261.5 90 Q262.5 87 265.5 87.5 M268.5 93 Q267.5 96 264.5 95.5" stroke="#ffffff" stroke-width="1.4" fill="none"/>
<path d="M284.8 91.2 L292.40000000000003 91.2 L288.6 95.2 Z" fill="#1a1a1a"/>
<path d="M309.0 83.0 L319.0 88.3 L319.0 98.7 L309.0 104.0 L299.0 98.7 L299.0 88.3 Z" fill="#ffffff" stroke="#18878a" stroke-width="2.2" stroke-linejoin="round"/>
<path d="M299 88.3 L309 93.5 L319 88.3 M309 93.5 L309 104.0" fill="none" stroke="#18878a" stroke-width="1.6"/>
<path d="M309 85.5 L309 90.5 M303 98.5 L306 96.5 M315 98.5 L312 96.5" fill="none" stroke="#18878a" stroke-width="1.8"/>
<rect x="327.5" y="83" width="1" height="23" fill="#d2d2d2"/><rect x="328.5" y="83" width="1" height="23" fill="#fafafa"/>
<path d="M334.0 89.0 L348.5 87.5 L349.3 103.2 L334.7 103.5 Z" fill="#2cd2d4" stroke="#18878a" stroke-width="2" stroke-linejoin="round"/>
<path d="M334.0 89.0 L339.6 83.3 L354.6 83.6 L348.5 87.5 Z" fill="#ffffff" stroke="#18878a" stroke-width="2" stroke-linejoin="round"/>
<path d="M348.5 87.5 L354.6 83.6 L354.6 100.1 L349.3 103.2 Z" fill="#ffffff" stroke="#18878a" stroke-width="2" stroke-linejoin="round"/>
<path d="M363.5 89.0 L378.0 87.5 L378.8 103.2 L364.2 103.5 Z" fill="#ffffff" stroke="#18878a" stroke-width="2" stroke-linejoin="round"/>
<path d="M363.5 89.0 L369.1 83.3 L384.1 83.6 L378.0 87.5 Z" fill="#2cd2d4" stroke="#18878a" stroke-width="2" stroke-linejoin="round"/>
<path d="M378.0 87.5 L384.1 83.6 L384.1 100.1 L378.8 103.2 Z" fill="#ffffff" stroke="#18878a" stroke-width="2" stroke-linejoin="round"/>
<path d="M368.5 100.5 L371.5 97 L373.5 99 M371.5 97 L371.5 92" fill="none" stroke="#18878a" stroke-width="1.6"/>
<circle cx="372.5" cy="91.5" r="1.6" fill="#18878a"/>
<path d="M393.0 89.0 L407.5 87.5 L408.3 103.2 L393.7 103.5 Z" fill="#ffffff" stroke="#18878a" stroke-width="2" stroke-linejoin="round"/>
<path d="M393.0 89.0 L398.6 83.3 L413.6 83.6 L407.5 87.5 Z" fill="#ffffff" stroke="#18878a" stroke-width="2" stroke-linejoin="round"/>
<path d="M407.5 87.5 L413.6 83.6 L413.6 100.1 L408.3 103.2 Z" fill="#2cd2d4" stroke="#18878a" stroke-width="2" stroke-linejoin="round"/>
<path d="M398 100.5 L401 97 L403 99 M401 97 L401 92" fill="none" stroke="#18878a" stroke-width="1.6"/>
<circle cx="402" cy="91.5" r="1.6" fill="#18878a"/>
<rect x="422" y="83" width="1" height="23" fill="#d2d2d2"/><rect x="423" y="83" width="1" height="23" fill="#fafafa"/>
<path d="M428.5 88.5 L434.0 84.2 L449.1 84.7 L449.1 100.5 L443.8 103.8 L429.1 104.0 Z" fill="#ffffff" stroke="#18878a" stroke-width="2.2" stroke-linejoin="round"/>
<path d="M434.0 89.5 L444.0 89.5 L444.0 99.0 L434.0 99.0 Z" fill="#2cd2d4"/>
<path d="M434.0 89.5 L444.0 89.5 L444.0 99.0 L434.0 99.0 Z" fill="none" stroke="#18878a" stroke-width="1.5"/>
<path d="M428.5 88.5 L434.0 89.5 M449.1 84.7 L444.0 89.5 M443.8 103.8 L444.0 99.0 M429.1 104.0 L434.0 99.0 M428.5 88.5 L443.5 86.5 L449.1 84.7 M443.5 86.5 L443.8 103.8" fill="none" stroke="#18878a" stroke-width="1.5"/>
<path d="M458.0 88.5 L463.5 84.2 L478.6 84.7 L478.6 100.5 L473.3 103.8 L458.6 104.0 Z" fill="#ffffff" stroke="#18878a" stroke-width="2.2" stroke-linejoin="round"/>
<path d="M458.6 104.0 L463.5 99.0 L473.5 99.0 L478.6 100.5 L473.3 103.8 Z" fill="#2cd2d4"/>
<path d="M463.5 89.5 L473.5 89.5 L473.5 99.0 L463.5 99.0 Z" fill="none" stroke="#18878a" stroke-width="1.5"/>
<path d="M458 88.5 L463.5 89.5 M478.6 84.7 L473.5 89.5 M473.3 103.8 L473.5 99.0 M458.6 104.0 L463.5 99.0 M458 88.5 L473 86.5 L478.6 84.7 M473 86.5 L473.3 103.8" fill="none" stroke="#18878a" stroke-width="1.5"/>
<path d="M487.5 88.5 L493.0 84.2 L508.1 84.7 L508.1 100.5 L502.8 103.8 L488.1 104.0 Z" fill="#ffffff" stroke="#18878a" stroke-width="2.2" stroke-linejoin="round"/>
<path d="M487.5 88.5 L493.0 89.5 L493.0 99.0 L488.1 104.0 Z" fill="#2cd2d4"/>
<path d="M493.0 89.5 L503.0 89.5 L503.0 99.0 L493.0 99.0 Z" fill="none" stroke="#18878a" stroke-width="1.5"/>
<path d="M487.5 88.5 L493.0 89.5 M508.1 84.7 L503.0 89.5 M502.8 103.8 L503.0 99.0 M488.1 104.0 L493.0 99.0 M487.5 88.5 L502.5 86.5 L508.1 84.7 M502.5 86.5 L502.8 103.8" fill="none" stroke="#18878a" stroke-width="1.5"/>
<rect x="516.5" y="83" width="1" height="23" fill="#d2d2d2"/><rect x="517.5" y="83" width="1" height="23" fill="#fafafa"/>
<path d="M523 88 L528 84 L543 100 L543 104 L538 104 Z" fill="#c8c8c8" stroke="#8a8a8a" stroke-width="0.9"/>
<path d="M527 89 L529 87.5 M530 92 L532 90.5 M533 95 L535 93.5 M536 98 L538 96.5" stroke="#777" stroke-width="0.8"/>
<rect x="550" y="80" width="1" height="28" fill="#d2d2d2"/><rect x="551" y="80" width="1" height="28" fill="#fafafa"/>
<rect x="555.5" y="83" width="1.5" height="1" fill="#a8a8a8"/>
<rect x="555.5" y="86.5" width="1.5" height="1" fill="#a8a8a8"/>
<rect x="555.5" y="90.0" width="1.5" height="1" fill="#a8a8a8"/>
<rect x="555.5" y="93.5" width="1.5" height="1" fill="#a8a8a8"/>
<rect x="555.5" y="97.0" width="1.5" height="1" fill="#a8a8a8"/>
<rect x="555.5" y="100.5" width="1.5" height="1" fill="#a8a8a8"/>
<rect x="555.5" y="104.0" width="1.5" height="1" fill="#a8a8a8"/>
<path d="M566 90 L573 85 L579 88 L579 92 L584 95 L584 100 L577 104 L566 98 Z" fill="#d4d4d4" stroke="#8d8d8d" stroke-width="1.1"/>
<path d="M566 90 L573 94 L579 92 M573 94 L573 98 L577 100 L584 95 M566 94 L573 98 M577 100 L577 104" stroke="#8d8d8d" stroke-width="0.9" fill="none"/>
<path d="M595 85.5 L602 85.5 L604 88 L614 88 L614 102 L595 102 Z" fill="#b8b8b8" stroke="#a0a0a0" stroke-width="0.9"/>
<rect x="595" y="90" width="19" height="12" fill="#c4c4c4"/>
<path d="M632 85.5 L625.5 85.5 L625.5 102 L642.5 102 L642.5 96" fill="none" stroke="#6d6d6d" stroke-width="2.6"/>
<path d="M630 97 Q630 89 637 89 L637 86 L643.5 91 L637 96 L637 93 Q632.5 93 630 97 Z" fill="#a8a8a8" stroke="#6d6d6d" stroke-width="1"/>
<path d="M661 85.5 L654 85.5 L654 102 L671 102 L671 96" fill="none" stroke="#6d6d6d" stroke-width="2.6"/>
<path d="M659 97 Q659 89 666 89 L666 86 L672.5 91 L666 96 L666 93 Q661.5 93 659 97 Z" fill="#a8a8a8" stroke="#6d6d6d" stroke-width="1"/>
<path d="M670 85 L675.5 91 L670 97" fill="none" stroke="#6d6d6d" stroke-width="1.6"/>
<path d="M680.9000000000001 91.2 L688.5 91.2 L684.7 95.2 Z" fill="#404040"/>
<rect x="692.5" y="80" width="1" height="28" fill="#d2d2d2"/><rect x="693.5" y="80" width="1" height="28" fill="#fafafa"/>
<rect x="697.5" y="83" width="1.5" height="1" fill="#a8a8a8"/>
<rect x="697.5" y="86.5" width="1.5" height="1" fill="#a8a8a8"/>
<rect x="697.5" y="90.0" width="1.5" height="1" fill="#a8a8a8"/>
<rect x="697.5" y="93.5" width="1.5" height="1" fill="#a8a8a8"/>
<rect x="697.5" y="97.0" width="1.5" height="1" fill="#a8a8a8"/>
<rect x="697.5" y="100.5" width="1.5" height="1" fill="#a8a8a8"/>
<rect x="697.5" y="104.0" width="1.5" height="1" fill="#a8a8a8"/>
<path d="M707 83.5 L725 83.5 L725 101 L721.5 104.5 L707 104.5 Z" fill="#f8f8f8" stroke="#b0b0b0" stroke-width="1.1"/>
<rect x="711" y="92" width="9" height="9" fill="none" stroke="#9a9a9a" stroke-width="1.6"/>
<circle cx="719" cy="91" r="5" fill="none" stroke="#9a9a9a" stroke-width="1.6"/>
<path d="M736 94 L736 103 L757 103 L757 94" fill="none" stroke="#b8b8b8" stroke-width="2.6"/>
<path d="M743 83 L750 83 L750 90 L754 90 L746.5 98 L739 90 L743 90 Z" fill="#a6a6a6" stroke="#8e8e8e" stroke-width="0.8"/>
<path d="M766 94 L766 103 L787 103 L787 94" fill="none" stroke="#8a8a8a" stroke-width="2.6"/>
<path d="M773 98 L780 98 L780 91 L784 91 L776.5 83 L769 91 L773 91 Z" fill="#3d78cc" stroke="#24509a" stroke-width="0.8"/>
<path d="M796.5 83.5 L816 83.5 L816 104.5 L796.5 104.5 Z" fill="#f8f8f8" stroke="#8e8e8e" stroke-width="1.1"/>
<rect x="799.5" y="92" width="9.5" height="9.5" fill="none" stroke="#d82828" stroke-width="1.6"/>
<circle cx="808" cy="91" r="5" fill="none" stroke="#d82828" stroke-width="1.6"/>
<line x1="811" y1="98" x2="816" y2="103" stroke="#1aa7ae" stroke-width="2.4"/>
<circle cx="808.5" cy="95.5" r="3.6" fill="#2cc3c8" stroke="#168a90" stroke-width="0.8"/>
<path d="M826 84 L841 86 L845.5 88 L845.5 104 L826 101 Z" fill="#3e6cc0" stroke="#1e3a78" stroke-width="1"/>
<rect x="830" y="90" width="8" height="8" fill="none" stroke="#d42020" stroke-width="1.5"/><rect x="834" y="94" width="8" height="6" fill="none" stroke="#d42020" stroke-width="1.5"/>
<path d="M854.5 87 L865 83.5 L876 87 L876 101 L865 104.5 L854.5 101 Z" fill="#dcdcdc" stroke="#a0a0a0" stroke-width="1"/>
<path d="M865 88 L865 104 L876 101 L876 87 Z" fill="#8e8e8e"/>
<path d="M862 90 Q857 90 858 94 Q862 96 861 99 Q858 101 856 99" stroke="#a8a8a8" stroke-width="1.4" fill="none"/>
<path d="M886 98 L893 91 M890 85 L893 91 L900 92 M888 93 L891 89" stroke="#8e8e8e" stroke-width="1.5" fill="none"/>
<circle cx="899" cy="99" r="4.5" fill="#b0b0b0" stroke="#7e7e7e" stroke-width="1.2"/>
<rect x="893" y="99" width="6" height="6" fill="#b0b0b0" stroke="#7e7e7e" stroke-width="1.1"/>
<rect x="915" y="83.5" width="19.5" height="20.5" fill="#f4f4f4" stroke="#b8b8b8" stroke-width="1.1"/>
<rect x="918" y="92" width="9" height="9" fill="none" stroke="#a8a8a8" stroke-width="1.4"/><circle cx="926" cy="91" r="5" fill="none" stroke="#a8a8a8" stroke-width="1.4"/>
<path d="M924 98 L927.5 102 L934 94" stroke="#9a9a9a" stroke-width="2.2" fill="none"/>
<rect x="944" y="85.5" width="7" height="7" fill="#d0d0d0" stroke="#808080" stroke-width="1.2"/>
<circle cx="949.5" cy="87.5" r="3.5" fill="#c0c0c0" stroke="#808080" stroke-width="1.2"/>
<rect x="954" y="84.5" width="7" height="7" fill="#d0d0d0" stroke="#808080" stroke-width="1.2"/>
<circle cx="959.5" cy="86.5" r="3.5" fill="#c0c0c0" stroke="#808080" stroke-width="1.2"/>
<rect x="950" y="96" width="7" height="7" fill="#d0d0d0" stroke="#808080" stroke-width="1.2"/>
<circle cx="955.5" cy="98" r="3.5" fill="#c0c0c0" stroke="#808080" stroke-width="1.2"/>
<rect x="975" y="85" width="9" height="8" rx="1" fill="#e6e6e6" stroke="#808080" stroke-width="1.4"/>
<rect x="975" y="96" width="9" height="8" rx="1" fill="#e6e6e6" stroke="#808080" stroke-width="1.4"/>
<circle cx="988" cy="89" r="4" fill="#d8d8d8" stroke="#808080" stroke-width="1.4"/><circle cx="988" cy="100" r="4" fill="#d8d8d8" stroke="#808080" stroke-width="1.4"/>
<path d="M973 94.5 L995 94.5" stroke="#909090" stroke-width="1" stroke-dasharray="1.5 1.5"/>
<path d="M1024.1 98.3 L1018.1 104.3 L1009.5 104.3 L1003.5 98.3 L1003.5 89.7 L1009.5 83.7 L1018.1 83.7 L1024.1 89.7 Z" fill="#d21414" stroke="#a00c0c" stroke-width="0.8"/>
<path d="M1009 89 L1018.5 98.5 M1018.5 89 L1009 98.5" stroke="#ffffff" stroke-width="2.8"/>
<rect x="6" y="115" width="1.5" height="1" fill="#a8a8a8"/>
<rect x="6" y="118.5" width="1.5" height="1" fill="#a8a8a8"/>
<rect x="6" y="122.0" width="1.5" height="1" fill="#a8a8a8"/>
<rect x="6" y="125.5" width="1.5" height="1" fill="#a8a8a8"/>
<rect x="6" y="129.0" width="1.5" height="1" fill="#a8a8a8"/>
<rect x="6" y="132.5" width="1.5" height="1" fill="#a8a8a8"/>
<rect x="6" y="136.0" width="1.5" height="1" fill="#a8a8a8"/>
<circle cx="25.1" cy="126.0" r="6.5" fill="#ffffff" opacity="0.7"/>
<circle cx="25.1" cy="126.0" r="5.6" fill="#d40f0f" stroke="#8a0a0a" stroke-width="0.6"/>
<line x1="47.8" y1="133.3" x2="62.4" y2="119" stroke="#b4b4b4" stroke-width="3"/>
<circle cx="47.8" cy="133.3" r="4.5" fill="#ffffff" opacity="0.7"/>
<circle cx="47.8" cy="133.3" r="3.6" fill="#d40f0f" stroke="#8a0a0a" stroke-width="0.6"/>
<circle cx="62.4" cy="119.0" r="4.5" fill="#ffffff" opacity="0.7"/>
<circle cx="62.4" cy="119.0" r="3.6" fill="#d40f0f" stroke="#8a0a0a" stroke-width="0.6"/>
<path d="M77.1 119.4 Q89 120 91.1 133.3" fill="none" stroke="#b4b4b4" stroke-width="3"/>
<circle cx="77.1" cy="119.4" r="4.5" fill="#ffffff" opacity="0.7"/>
<circle cx="77.1" cy="119.4" r="3.6" fill="#d40f0f" stroke="#8a0a0a" stroke-width="0.6"/>
<circle cx="77.1" cy="133.3" r="4.5" fill="#ffffff" opacity="0.7"/>
<circle cx="77.1" cy="133.3" r="3.6" fill="#d40f0f" stroke="#8a0a0a" stroke-width="0.6"/>
<circle cx="91.1" cy="133.3" r="4.5" fill="#ffffff" opacity="0.7"/>
<circle cx="91.1" cy="133.3" r="3.6" fill="#d40f0f" stroke="#8a0a0a" stroke-width="0.6"/>
<path d="M101.4 123.9 L109.0 123.9 L105.2 127.9 Z" fill="#1a1a1a"/>
<circle cx="124.6" cy="126.2" r="8.3" fill="none" stroke="#a8a8a8" stroke-width="3.4"/>
<circle cx="125.2" cy="126.2" r="4.0" fill="#ffffff" opacity="0.7"/>
<circle cx="125.2" cy="126.2" r="3.1" fill="#d40f0f" stroke="#8a0a0a" stroke-width="0.6"/>
<circle cx="133.2" cy="126.2" r="4.0" fill="#ffffff" opacity="0.7"/>
<circle cx="133.2" cy="126.2" r="3.1" fill="#d40f0f" stroke="#8a0a0a" stroke-width="0.6"/>
<path d="M143.0 124.2 L150.60000000000002 124.2 L146.8 128.2 Z" fill="#1a1a1a"/>
<path d="M167.3 115.5 Q170 118 175.5 132 Q177.5 135.5 170 136 L163 136 Q157.5 135.5 159.5 132 Q165 119 167.3 115.5 Z" fill="#3b6cb8" stroke="#264c90" stroke-width="0.8"/>
<path d="M161.4 130 Q167 132 171.6 124.3" fill="none" stroke="#dcdcdc" stroke-width="1.2"/>
<circle cx="161.4" cy="130.0" r="3.9" fill="#ffffff" opacity="0.7"/>
<circle cx="161.4" cy="130.0" r="3.0" fill="#d40f0f" stroke="#8a0a0a" stroke-width="0.6"/>
<circle cx="171.6" cy="124.3" r="3.9" fill="#ffffff" opacity="0.7"/>
<circle cx="171.6" cy="124.3" r="3.0" fill="#d40f0f" stroke="#8a0a0a" stroke-width="0.6"/>
<path d="M183.6 124.2 L191.20000000000002 124.2 L187.4 128.2 Z" fill="#1a1a1a"/>
<path d="M201.4 133.2 Q204 126 209 126.5 Q213 127 215.4 118.6" fill="none" stroke="#b4b4b4" stroke-width="3"/>
<circle cx="202.7" cy="120.5" r="4.2" fill="#ffffff" opacity="0.7"/>
<circle cx="202.7" cy="120.5" r="3.3" fill="#d40f0f" stroke="#8a0a0a" stroke-width="0.6"/>
<circle cx="215.4" cy="118.6" r="4.2" fill="#ffffff" opacity="0.7"/>
<circle cx="215.4" cy="118.6" r="3.3" fill="#d40f0f" stroke="#8a0a0a" stroke-width="0.6"/>
<circle cx="201.4" cy="133.2" r="4.2" fill="#ffffff" opacity="0.7"/>
<circle cx="201.4" cy="133.2" r="3.3" fill="#d40f0f" stroke="#8a0a0a" stroke-width="0.6"/>
<circle cx="213.5" cy="132.0" r="4.2" fill="#ffffff" opacity="0.7"/>
<circle cx="213.5" cy="132.0" r="3.3" fill="#d40f0f" stroke="#8a0a0a" stroke-width="0.6"/>
<path d="M224.89999999999998 124.2 L232.5 124.2 L228.7 128.2 Z" fill="#1a1a1a"/>
<rect x="237.5" y="114" width="1" height="24" fill="#d2d2d2"/><rect x="238.5" y="114" width="1" height="24" fill="#fafafa"/>
<path d="M248.2 133.4 L251.6 123.9 L257.1 133.4 L262.4 118.9" fill="none" stroke="#b4b4b4" stroke-width="2.8"/>
<circle cx="248.2" cy="133.4" r="4.2" fill="#ffffff" opacity="0.7"/>
<circle cx="248.2" cy="133.4" r="3.3" fill="#d40f0f" stroke="#8a0a0a" stroke-width="0.6"/>
<circle cx="251.6" cy="123.9" r="4.2" fill="#ffffff" opacity="0.7"/>
<circle cx="251.6" cy="123.9" r="3.3" fill="#d40f0f" stroke="#8a0a0a" stroke-width="0.6"/>
<circle cx="257.1" cy="133.4" r="4.2" fill="#ffffff" opacity="0.7"/>
<circle cx="257.1" cy="133.4" r="3.3" fill="#d40f0f" stroke="#8a0a0a" stroke-width="0.6"/>
<circle cx="262.4" cy="118.9" r="4.2" fill="#ffffff" opacity="0.7"/>
<circle cx="262.4" cy="118.9" r="3.3" fill="#d40f0f" stroke="#8a0a0a" stroke-width="0.6"/>
<rect x="277.6" y="119.2" width="15" height="14.8" fill="none" stroke="#b4b4b4" stroke-width="2.8"/>
<circle cx="277.6" cy="134.0" r="4.2" fill="#ffffff" opacity="0.7"/>
<circle cx="277.6" cy="134.0" r="3.3" fill="#d40f0f" stroke="#8a0a0a" stroke-width="0.6"/>
<circle cx="292.4" cy="119.4" r="4.2" fill="#ffffff" opacity="0.7"/>
<circle cx="292.4" cy="119.4" r="3.3" fill="#d40f0f" stroke="#8a0a0a" stroke-width="0.6"/>
<path d="M313.8 135.3 L305.6 130.6 L305.6 121.0 L313.8 116.3 L322.0 121.0 L322.0 130.6 Z" fill="none" stroke="#b4b4b4" stroke-width="2.8"/>
<circle cx="313.8" cy="126.3" r="4.2" fill="#ffffff" opacity="0.7"/>
<circle cx="313.8" cy="126.3" r="3.3" fill="#d40f0f" stroke="#8a0a0a" stroke-width="0.6"/>
<circle cx="321.7" cy="121.8" r="4.2" fill="#ffffff" opacity="0.7"/>
<circle cx="321.7" cy="121.8" r="3.3" fill="#d40f0f" stroke="#8a0a0a" stroke-width="0.6"/>
<path d="M331.2 124.2 L338.8 124.2 L335 128.2 Z" fill="#1a1a1a"/>
<rect x="341.5" y="112.5" width="29.5" height="27" fill="#d5e7f6" stroke="#acd0ee" stroke-width="1"/>
<path d="M351 118.8 L360 118.8 Q366 119 366 126 Q366 133 358 133 L351 133 Q345 133 345 126 Q345 119 351 118.8 Z" fill="none" stroke="#a8a8a8" stroke-width="3"/>
<circle cx="352.7" cy="126.8" r="4.2" fill="#ffffff" opacity="0.7"/>
<circle cx="352.7" cy="126.8" r="3.3" fill="#d40f0f" stroke="#8a0a0a" stroke-width="0.6"/>
<circle cx="360.6" cy="120.5" r="4.2" fill="#ffffff" opacity="0.7"/>
<circle cx="360.6" cy="120.5" r="3.3" fill="#d40f0f" stroke="#8a0a0a" stroke-width="0.6"/>
<rect x="373.8" y="114" width="1" height="24" fill="#d2d2d2"/><rect x="374.8" y="114" width="1" height="24" fill="#fafafa"/>
<path d="M384 115 L384 122 M384 127 L384 134 L392 134 M397 134 L402 134" fill="none" stroke="#b4b4b4" stroke-width="2" stroke-dasharray="2.5 1.5"/>
<path d="M384.1 123.7 Q385 131 394.5 132.1" fill="none" stroke="#d8d8d8" stroke-width="1.2"/>
<circle cx="384.1" cy="123.7" r="4.2" fill="#ffffff" opacity="0.7"/>
<circle cx="384.1" cy="123.7" r="3.3" fill="#d40f0f" stroke="#8a0a0a" stroke-width="0.6"/>
<circle cx="394.5" cy="132.1" r="4.2" fill="#ffffff" opacity="0.7"/>
<circle cx="394.5" cy="132.1" r="3.3" fill="#d40f0f" stroke="#8a0a0a" stroke-width="0.6"/>
<path d="M408.2 124.2 L415.8 124.2 L412 128.2 Z" fill="#1a1a1a"/>
<path d="M423 116 L442 137 M439 116 L425 137" fill="none" stroke="#b4b4b4" stroke-width="2.6"/>
<circle cx="431.6" cy="124.7" r="4.2" fill="#ffffff" opacity="0.7"/>
<circle cx="431.6" cy="124.7" r="3.3" fill="#d40f0f" stroke="#8a0a0a" stroke-width="0.6"/>
<path d="M456 132 L470 119" stroke="#b4b4b4" stroke-width="2.6" stroke-dasharray="4 2"/>
<path d="M463 117 L472 117 L472 126" fill="none" stroke="#b4b4b4" stroke-width="2.6"/>
<circle cx="455.6" cy="132.5" r="4.5" fill="#ffffff" opacity="0.7"/>
<circle cx="455.6" cy="132.5" r="3.6" fill="#d40f0f" stroke="#8a0a0a" stroke-width="0.6"/>
<path d="M481.5 126 L485 122.5 L500 122.5 L500 133 L496.5 136.5 L481.5 136.5 Z" fill="#3c6cc0" stroke="#1e3f80" stroke-width="0.9"/>
<path d="M481.5 126 L496.5 126 L500 122.5 M496.5 126 L496.5 136.5" stroke="#80a8e8" stroke-width="0.8" fill="none"/>
<path d="M489 117.5 L501 117.5 M495 117.5 L495 123" stroke="#3a5a90" stroke-width="1.5"/>
<circle cx="489.5" cy="117.5" r="3.7" fill="#ffffff" opacity="0.7"/>
<circle cx="489.5" cy="117.5" r="2.8" fill="#d40f0f" stroke="#8a0a0a" stroke-width="0.6"/>
<circle cx="501.0" cy="117.5" r="3.7" fill="#ffffff" opacity="0.7"/>
<circle cx="501.0" cy="117.5" r="2.8" fill="#d40f0f" stroke="#8a0a0a" stroke-width="0.6"/>
<rect x="511" y="124" width="10" height="11" fill="#eef4fb" stroke="#d86a6a" stroke-width="1.6"/>
<circle cx="520" cy="124" r="5.5" fill="none" stroke="#d86a6a" stroke-width="1.6"/>
<circle cx="526" cy="121" r="5.5" fill="none" stroke="#9ac0e8" stroke-width="1.6"/>
<rect x="542" y="123" width="11" height="11" fill="#f6e8e8" stroke="#c84a4a" stroke-width="1.6"/>
<rect x="545" y="126" width="5" height="5" fill="none" stroke="#c84a4a" stroke-width="1"/>
<path d="M551 117 L562 117 L562 127 M551 117 L551 123" fill="none" stroke="#2a60b8" stroke-width="1.6" stroke-dasharray="2.5 1.5"/>
<rect x="568" y="111" width="1" height="30" fill="#d2d2d2"/><rect x="569" y="111" width="1" height="30" fill="#fafafa"/>
<rect x="572.5" y="115" width="1.5" height="1" fill="#a8a8a8"/>
<rect x="572.5" y="118.5" width="1.5" height="1" fill="#a8a8a8"/>
<rect x="572.5" y="122.0" width="1.5" height="1" fill="#a8a8a8"/>
<rect x="572.5" y="125.5" width="1.5" height="1" fill="#a8a8a8"/>
<rect x="572.5" y="129.0" width="1.5" height="1" fill="#a8a8a8"/>
<rect x="572.5" y="132.5" width="1.5" height="1" fill="#a8a8a8"/>
<rect x="572.5" y="136.0" width="1.5" height="1" fill="#a8a8a8"/>
<path d="M582.5 116.5 L586 120 M602 116.5 L598.5 120 M582.5 135.5 L586 132 M602 135.5 L598.5 132" fill="none" stroke="#7a0000" stroke-width="3.6999999999999997" stroke-linecap="round" stroke-linejoin="round"/>
<path d="M582.5 116.5 L586 120 M602 116.5 L598.5 120 M582.5 135.5 L586 132 M602 135.5 L598.5 132" fill="none" stroke="#cc0c0c" stroke-width="2.8" stroke-linecap="round" stroke-linejoin="round"/>
<circle cx="592.3" cy="126" r="4.2" fill="#cc0c0c" stroke="#7a0000" stroke-width="0.6"/>
<path d="M614.5 135.5 Q613.5 124 618 120.5 Q623 117.5 631.5 117.8" fill="none" stroke="#7a0000" stroke-width="3.5" stroke-linecap="round" stroke-linejoin="round"/>
<path d="M614.5 135.5 Q613.5 124 618 120.5 Q623 117.5 631.5 117.8" fill="none" stroke="#cc0c0c" stroke-width="2.6" stroke-linecap="round" stroke-linejoin="round"/>
<circle cx="617.1" cy="120.7" r="4.3" fill="#cc0c0c" stroke="#7a0000" stroke-width="0.6"/>
<path d="M652.5 118.3 L652.5 134.5" fill="none" stroke="#7a0000" stroke-width="4.3" stroke-linecap="round" stroke-linejoin="round"/>
<path d="M652.5 118.3 L652.5 134.5" fill="none" stroke="#cc0c0c" stroke-width="3.4" stroke-linecap="round" stroke-linejoin="round"/>
<path d="M672.8 126.3 L690.2 126.3" fill="none" stroke="#7a0000" stroke-width="4.5" stroke-linecap="round" stroke-linejoin="round"/>
<path d="M672.8 126.3 L690.2 126.3" fill="none" stroke="#cc0c0c" stroke-width="3.6" stroke-linecap="round" stroke-linejoin="round"/>
<path d="M702.6 127.3 L714 118.7 M707 131.8 L718.6 123.2" fill="none" stroke="#7a0000" stroke-width="3.9" stroke-linecap="round" stroke-linejoin="round"/>
<path d="M702.6 127.3 L714 118.7 M707 131.8 L718.6 123.2" fill="none" stroke="#cc0c0c" stroke-width="3" stroke-linecap="round" stroke-linejoin="round"/>
<path d="M740.6 118.5 L740.6 131" fill="none" stroke="#7a0000" stroke-width="4.5" stroke-linecap="round" stroke-linejoin="round"/>
<path d="M740.6 118.5 L740.6 131" fill="none" stroke="#cc0c0c" stroke-width="3.6" stroke-linecap="round" stroke-linejoin="round"/>
<path d="M731.8 132.5 L749.4 132.5" fill="none" stroke="#7a0000" stroke-width="4.5" stroke-linecap="round" stroke-linejoin="round"/>
<path d="M731.8 132.5 L749.4 132.5" fill="none" stroke="#cc0c0c" stroke-width="3.6" stroke-linecap="round" stroke-linejoin="round"/>
<path d="M762 122.8 Q772 124 774.5 135" fill="none" stroke="#7a0000" stroke-width="3.6999999999999997" stroke-linecap="round" stroke-linejoin="round"/>
<path d="M762 122.8 Q772 124 774.5 135" fill="none" stroke="#cc0c0c" stroke-width="2.8" stroke-linecap="round" stroke-linejoin="round"/>
<path d="M764 118 L779.5 130.8" fill="none" stroke="#7a0000" stroke-width="3.6999999999999997" stroke-linecap="round" stroke-linejoin="round"/>
<path d="M764 118 L779.5 130.8" fill="none" stroke="#cc0c0c" stroke-width="2.8" stroke-linecap="round" stroke-linejoin="round"/>
<path d="M795.2 121.5 L806.3 121.5 M795.2 129.7 L806.3 129.7" fill="none" stroke="#7a0000" stroke-width="4.3" stroke-linecap="round" stroke-linejoin="round"/>
<path d="M795.2 121.5 L806.3 121.5 M795.2 129.7 L806.3 129.7" fill="none" stroke="#cc0c0c" stroke-width="3.4" stroke-linecap="round" stroke-linejoin="round"/>
<path d="M821 118.5 L827 126.5 L821 134.5 M840 118.5 L834 126.5 L840 134.5" fill="none" stroke="#7a0000" stroke-width="3.9" stroke-linecap="round" stroke-linejoin="round"/>
<path d="M821 118.5 L827 126.5 L821 134.5 M840 118.5 L834 126.5 L840 134.5" fill="none" stroke="#cc0c0c" stroke-width="3" stroke-linecap="round" stroke-linejoin="round"/>
<path d="M868.4 126.2 A8.7 8.7 0 1 1 868.4 126.1 Z M854 132 L865.5 120.5" fill="none" stroke="#7a0000" stroke-width="3.3" stroke-linecap="round" stroke-linejoin="round"/>
<path d="M868.4 126.2 A8.7 8.7 0 1 1 868.4 126.1 Z M854 132 L865.5 120.5" fill="none" stroke="#cc0c0c" stroke-width="2.4" stroke-linecap="round" stroke-linejoin="round"/>
<rect x="877.2" y="114" width="1" height="24" fill="#d2d2d2"/><rect x="878.2" y="114" width="1" height="24" fill="#fafafa"/>
<rect x="887.7" y="124.5" width="15.2" height="11.8" fill="#cc0c0c" stroke="#7a0000" stroke-width="0.6"/>
<path d="M890.8 125 L890.8 121.5 Q890.8 117.3 895.3 117.3 Q899.8 117.3 899.8 121.5 L899.8 125" fill="none" stroke="#7a0000" stroke-width="3.5" stroke-linecap="round" stroke-linejoin="round"/>
<path d="M890.8 125 L890.8 121.5 Q890.8 117.3 895.3 117.3 Q899.8 117.3 899.8 121.5 L899.8 125" fill="none" stroke="#cc0c0c" stroke-width="2.6" stroke-linecap="round" stroke-linejoin="round"/>
<path d="M915.5 120.5 L915.5 132.5 M934 120.5 L934 132.5 M915.5 126.5 L934 126.5" fill="none" stroke="#7a0000" stroke-width="3.9" stroke-linecap="round" stroke-linejoin="round"/>
<path d="M915.5 120.5 L915.5 132.5 M934 120.5 L934 132.5 M915.5 126.5 L934 126.5" fill="none" stroke="#cc0c0c" stroke-width="3" stroke-linecap="round" stroke-linejoin="round"/>
<path d="M949 118 L960 118 M949 134.5 L960 134.5 M954.5 118 L954.5 134.5" fill="none" stroke="#7a0000" stroke-width="3.9" stroke-linecap="round" stroke-linejoin="round"/>
<path d="M949 118 L960 118 M949 134.5 L960 134.5 M954.5 118 L954.5 134.5" fill="none" stroke="#cc0c0c" stroke-width="3" stroke-linecap="round" stroke-linejoin="round"/>
<path d="M977 132.5 L991 118.5" fill="none" stroke="#7a0000" stroke-width="3.6999999999999997" stroke-linecap="round" stroke-linejoin="round"/>
<path d="M977 132.5 L991 118.5" fill="none" stroke="#cc0c0c" stroke-width="2.8" stroke-linecap="round" stroke-linejoin="round"/>
<path d="M974 135.5 L975.5 126.5 L983 134 Z M993.9 115.7 L992.4 124.7 L984.9 117.2 Z" fill="#cc0c0c" stroke="#7a0000" stroke-width="0.6"/>
<path d="M1011.4 126 m-8.7 0 a8.7 8.7 0 1 0 17.4 0 a8.7 8.7 0 1 0 -17.4 0 M1011.4 126.5 L1018.5 119.5" fill="none" stroke="#7a0000" stroke-width="3.3" stroke-linecap="round" stroke-linejoin="round"/>
<path d="M1011.4 126 m-8.7 0 a8.7 8.7 0 1 0 17.4 0 a8.7 8.7 0 1 0 -17.4 0 M1011.4 126.5 L1018.5 119.5" fill="none" stroke="#cc0c0c" stroke-width="2.4" stroke-linecap="round" stroke-linejoin="round"/>
</svg></body></html>
